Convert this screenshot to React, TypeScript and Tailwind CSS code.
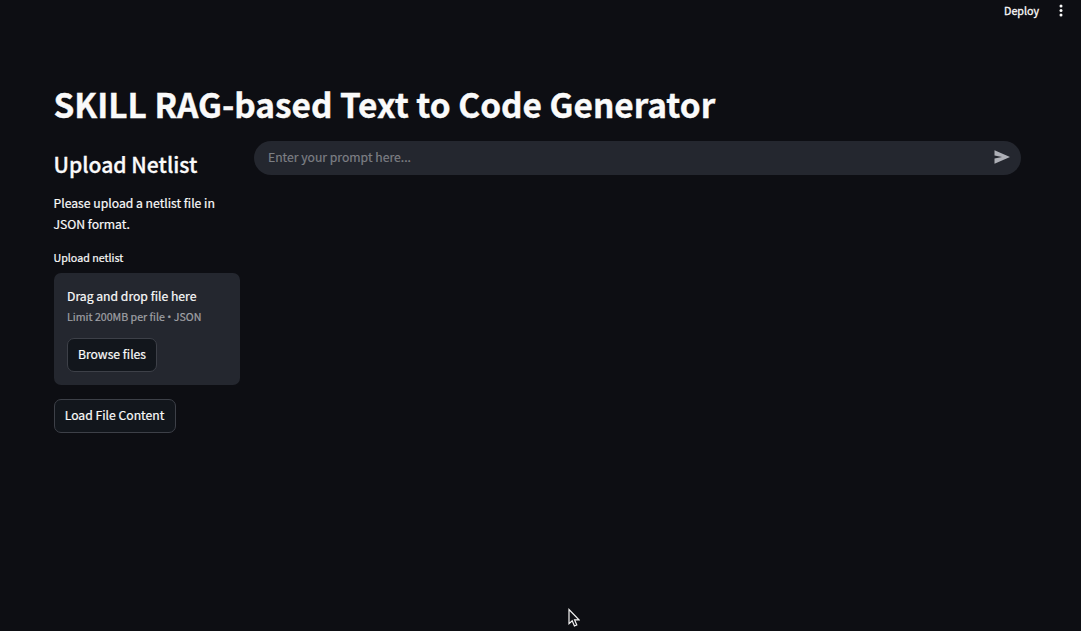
import React from "react";

function Header() {
  return (
    <header className="flex h-[48px] items-start justify-end pr-[14px] text-[10.7px]">
      <button type="button" className="mr-[16px] h-[21px] leading-[21px] [-webkit-text-stroke:0.3px]">Deploy</button>
      <button type="button" aria-label="Menu" className="flex h-[21px] w-[12px] items-center justify-center">
        <svg width="4" height="13" viewBox="0 0 4 13" fill="currentColor">
          <circle cx="2" cy="2" r="1.5" />
          <circle cx="2" cy="6.5" r="1.5" />
          <circle cx="2" cy="11" r="1.5" />
        </svg>
      </button>
    </header>
  );
}

function UploadPanel() {
  return (
    <aside className="w-[186.5px] shrink-0 whitespace-nowrap">
      <h2 className="mt-[9px] h-[32px] text-[21.1px] font-medium leading-[31px] [-webkit-text-stroke:0.3px]">Upload Netlist</h2>
      <p className="mt-[12px] text-[12.2px] leading-[21px]">
        Please upload a netlist file in
        <br />
        JSON format.
      </p>
      <div className="mt-[13px] h-[20px] text-[10.7px] leading-[20px]">Upload netlist</div>
      <section className="mt-[4.5px] h-[112.5px] rounded-[7px] bg-[#24272f] pl-[13.5px] pt-[13.5px]">
        <div className="h-[21px] text-[12.2px] leading-[20px]">Drag and drop file here</div>
        <div className="h-[21px] text-[10.65px] leading-[20px] text-[#a0a1a6]">
          Limit 200MB per file <span className="font-['Open_Sans',sans-serif]">•</span> JSON
        </div>
        <button type="button" className="mt-[10px] flex h-[34px] w-[90px] items-start justify-center rounded-[7px] border border-[#3d4048] bg-[#12161c] text-[12.2px] leading-[31px]">
          Browse files
        </button>
      </section>
      <button type="button" className="mt-[14px] flex h-[34px] w-[122px] items-start justify-center rounded-[7px] border border-[#3d4048] bg-[#12161c] text-[12.2px] leading-[31px]">
        Load File Content
      </button>
    </aside>
  );
}

function PromptBar() {
  return (
    <form className="mt-px flex h-[34px] w-[767px] items-start justify-between rounded-full bg-[#24272f] pl-[14.5px] pr-[10.5px]">
      <span className="h-[34px] whitespace-nowrap text-[12.2px] leading-[32px] text-[#7d7f84]">Enter your prompt here...</span>
      <svg className="mt-[9px]" width="16" height="14" viewBox="0 0 16 14" fill="#adafb6">
        <path d="M.5 .3 16 7 .5 13.7V8.5L8 7 .5 5.5Z" />
      </svg>
    </form>
  );
}

export default function App() {
  return (
    <div className="relative h-[631px] w-[1081px] overflow-hidden bg-[#0d0e13] font-['Noto_Sans_CJK_SC',sans-serif] text-[#fafafa] [-webkit-text-stroke:0.2px]">
      <Header />
      <main className="px-[53.5px] pt-[32px]">
        <h1 className="h-[50px] whitespace-nowrap text-[33.4px] font-bold leading-[48px] [-webkit-text-stroke:0.4px]">
          SKILL RAG-based Text to Code Generator
        </h1>
        <div className="mt-[10px] flex gap-[13.5px]">
          <UploadPanel />
          <PromptBar />
        </div>
      </main>
      <svg className="absolute left-[568px] top-[608px]" width="12" height="20" viewBox="0 0 12 20" fill="#101116" stroke="#f4f4f4" strokeWidth="1.2">
        <path d="M1 1.5v14.2l3.2-3 2.2 5.3 2.4-1-2.2-5.1H11Z" />
      </svg>
    </div>
  );
}
